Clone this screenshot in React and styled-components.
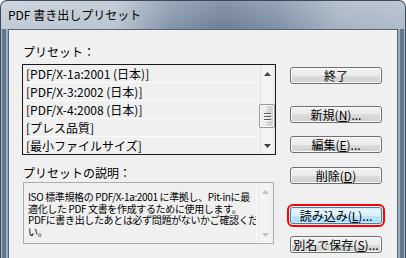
import React from "react";
import styled, { createGlobalStyle } from "styled-components";

const Global = createGlobalStyle`
  html, body { margin: 0; padding: 0; background: #ffffff; }
  * { box-sizing: border-box; }
  body { font-family: "Noto Sans CJK JP", "Noto Sans", sans-serif; }
`;

const Window = styled.div`
  width: 406px;
  height: 258px;
  border: 1px solid #3b4a5c;
  border-bottom: none;
  border-radius: 7px 7px 0 0;
  overflow: hidden;
  display: flex;
  flex-direction: column;
  background: linear-gradient(
    to right,
    #c3ccd6 0%,
    #bac5d0 28%,
    #8495aa 42%,
    #6d7f96 55%,
    #7f90a6 68%,
    #a7b5c3 84%,
    #aebbc8 100%
  );
`;

const TitleBar = styled.div`
  height: 28px;
  flex: none;
  display: flex;
  align-items: center;
  padding-left: 7px;
  padding-bottom: 1px;
  font-size: 12px;
  color: #000;
  background: linear-gradient(rgba(255, 255, 255, 0.18), rgba(255, 255, 255, 0));
`;

const Body = styled.div`
  flex: 1;
  display: flex;
  padding: 0 7px;
  background: linear-gradient(
    to right,
    #a9b7c6 0 1px,
    #62768e 1px 5px,
    #9cacbd 5px 7px,
    transparent 7px calc(100% - 7px),
    #9cacbd calc(100% - 7px) calc(100% - 5px),
    #62768e calc(100% - 5px) calc(100% - 1px),
    #a9b7c6 calc(100% - 1px)
  );
`;

const Client = styled.div`
  flex: 1;
  display: flex;
  gap: 14px;
  padding-left: 13px;
  background: #f0f0f0;
  border: 1px solid #56667a;
  border-bottom: none;
`;

const LeftColumn = styled.div`
  width: 254px;
  display: flex;
  flex-direction: column;
  padding-top: 15px;
`;

const Label = styled.div`
  font-size: 12px;
  line-height: 14px;
  height: 14px;
  color: #000;
  margin-top: ${(p) => p.$mt || 0}px;
  padding-left: 1px;
  white-space: nowrap;
`;

const ListBox = styled.div`
  margin-top: 5px;
  height: 91px;
  border: 1px solid #1a1a1a;
  background: #f0f0f0;
  display: flex;
`;

const Rows = styled.div`
  flex: 1;
  overflow: hidden;
`;

const Row = styled.div`
  height: 18px;
  border-bottom: 1px solid #fcfcfc;
  padding-left: 3px;
  font-size: 12px;
  line-height: 17px;
  color: #000;
  white-space: nowrap;
`;

const ScrollBar = styled.div`
  width: 17px;
  flex: none;
  display: flex;
  flex-direction: column;
  background: linear-gradient(to right, #e4e4e4, #f3f3f3 25%, #f3f3f3 75%, #e8e8e8);
  border-left: 1px solid #f8f8f8;
`;

const ArrowCell = styled.div`
  height: 17px;
  flex: none;
  display: flex;
  align-items: center;
  justify-content: center;
`;

const Track = styled.div`
  flex: 1;
  display: flex;
  flex-direction: column;
  align-items: center;
`;

const Thumb = styled.div`
  margin-top: 22px;
  width: 16px;
  height: 24px;
  border: 1px solid #979797;
  border-radius: 2px;
  background: linear-gradient(to right, #f2f2f2, #e7e7e7 50%, #d6d6d6 51%, #cfcfcf);
  box-shadow: inset 0 0 0 1px #fafafa;
  display: flex;
  flex-direction: column;
  align-items: center;
  justify-content: center;
  gap: 2px;
`;

const Grip = styled.div`
  width: 7px;
  height: 1px;
  background: #5c5c5c;
  box-shadow: 0 1px 0 #fafafa;
`;

const DescBox = styled.div`
  margin-top: 2px;
  margin-left: 1px;
  width: 251px;
  height: 62px;
  border: 1px solid #acacac;
  background: #f0f0f0;
  display: flex;
`;

const DescText = styled.div`
  flex: 1;
  min-width: 0;
  padding: 8px 0 0 4px;
  font-size: 10px;
  letter-spacing: -0.35px;
  color: #000;
`;

const DescLine = styled.div`
  height: 11.5px;
  line-height: 11.5px;
  white-space: nowrap;
`;

const DisabledBar = styled(ScrollBar)`
  background: linear-gradient(to right, #ededed, #f4f4f4 30%, #f4f4f4 70%, #efefef);
`;

const RightColumn = styled.div`
  display: flex;
  flex-direction: column;
  padding-top: 37px;
`;

const Button = styled.button`
  width: 92px;
  height: 17px;
  margin-top: ${(p) => p.$mt}px;
  padding: 0;
  border: 1px solid ${(p) => (p.$focused ? "#3c7fb1" : "#707070")};
  border-radius: 3px;
  background: ${(p) =>
    p.$focused
      ? "linear-gradient(#eaf6fd 0%, #d9f0fc 50%, #bee6fd 50%, #a7d9f5 100%)"
      : "linear-gradient(#f2f2f2 0%, #ebebeb 50%, #dddddd 50%, #cfcfcf 100%)"};
  box-shadow: inset 0 0 0 1px ${(p) => (p.$focused ? "#d2eefc" : "#fbfbfb")};
  outline: ${(p) => (p.$focused ? "2px solid #ff0000" : "none")};
  outline-offset: 1px;
  font-family: "Noto Sans CJK JP", "Noto Sans", sans-serif;
  font-size: 12px;
  line-height: 15px;
  color: #000;
  display: flex;
  align-items: center;
  justify-content: center;
  white-space: nowrap;
`;

const Key = styled.span`
  text-decoration: underline;
  text-underline-offset: 1px;
`;

const Arrow = ({ dir, color }) => (
  <svg width="7" height="4" viewBox="0 0 7 4">
    <path d={dir === "up" ? "M0 4 L3.5 0 L7 4 Z" : "M0 0 L3.5 4 L7 0 Z"} fill={color} />
  </svg>
);

const presets = [
  "[PDF/X-1a:2001 (日本)]",
  "[PDF/X-3:2002 (日本)]",
  "[PDF/X-4:2008 (日本)]",
  "[プレス品質]",
  "[最小ファイルサイズ]",
];

const descLines = [
  "ISO 標準規格の PDF/X-1a:2001 に準拠し、Pit-inに最",
  "適化した PDF 文書を作成するために使用します。",
  "PDFに書き出したあとは必ず問題がないかご確認くださ",
  "い。",
];

export default function App() {
  return (
    <>
      <Global />
      <Window>
        <TitleBar>PDF 書き出しプリセット</TitleBar>
        <Body>
          <Client>
            <LeftColumn>
              <Label>プリセット：</Label>
              <ListBox>
                <Rows>
                  {presets.map((p) => (
                    <Row key={p}>{p}</Row>
                  ))}
                </Rows>
                <ScrollBar>
                  <ArrowCell>
                    <Arrow dir="up" color="#404040" />
                  </ArrowCell>
                  <Track>
                    <Thumb>
                      <Grip />
                      <Grip />
                      <Grip />
                    </Thumb>
                  </Track>
                  <ArrowCell>
                    <Arrow dir="down" color="#404040" />
                  </ArrowCell>
                </ScrollBar>
              </ListBox>
              <Label $mt={11}>プリセットの説明：</Label>
              <DescBox>
                <DescText>
                  {descLines.map((l) => (
                    <DescLine key={l}>{l}</DescLine>
                  ))}
                </DescText>
                <DisabledBar>
                  <ArrowCell>
                    <Arrow dir="up" color="#c0c0c0" />
                  </ArrowCell>
                  <Track />
                  <ArrowCell>
                    <Arrow dir="down" color="#c0c0c0" />
                  </ArrowCell>
                </DisabledBar>
              </DescBox>
            </LeftColumn>
            <RightColumn>
              <Button $mt={0}>終了</Button>
              <Button $mt={22}>
                新規(<Key>N</Key>)...
              </Button>
              <Button $mt={13}>
                編集(<Key>E</Key>)...
              </Button>
              <Button $mt={14}>
                削除(<Key>D</Key>)
              </Button>
              <Button $mt={23} $focused>
                読み込み(<Key>L</Key>)...
              </Button>
              <Button $mt={12}>
                別名で保存(<Key>S</Key>)...
              </Button>
            </RightColumn>
          </Client>
        </Body>
      </Window>
    </>
  );
}
